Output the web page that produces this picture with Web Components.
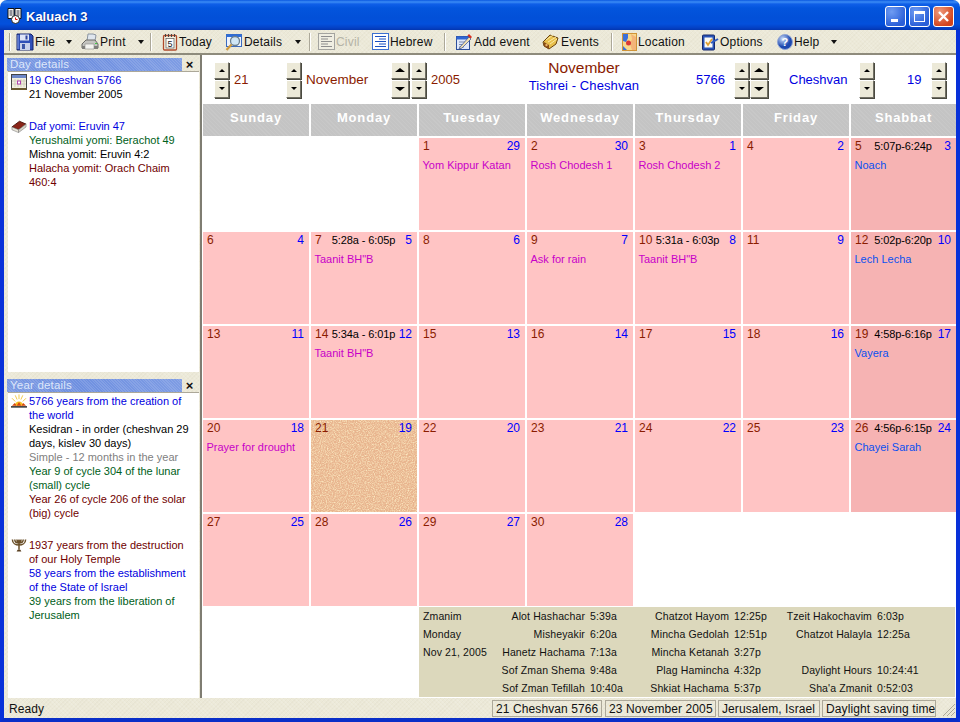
<!DOCTYPE html>
<html>
<head>
<title>Kaluach 3</title>
<style>
html, body { margin:0; padding:0; background:#fff; }
body { font-family:"Liberation Sans", Arial, sans-serif; }
</style>
</head>
<body>
<kl-window>
	<kl-titlebar slot="title">Kaluach 3</kl-titlebar>
	<kl-toolbar slot="tools"></kl-toolbar>
	<kl-sidebar slot="side"></kl-sidebar>
	<kl-calendar slot="main"></kl-calendar>
	<kl-status slot="status"></kl-status>
</kl-window>

<script>
const BASE_FONT = '"Liberation Sans", Arial, sans-serif';
const HATCH = "repeating-linear-gradient(45deg, rgba(255,255,255,.13) 0 1px, transparent 1px 3px), repeating-linear-gradient(-45deg, rgba(120,115,85,.04) 0 1px, transparent 1px 3px)";
const NOISE = "url(\"data:image/svg+xml,%3Csvg xmlns='http://www.w3.org/2000/svg' width='106' height='92'%3E%3Cfilter id='n'%3E%3CfeTurbulence type='fractalNoise' baseFrequency='.85' numOctaves='2'/%3E%3CfeColorMatrix values='0 0 0 0 .96 0 0 0 0 .8 0 0 0 0 .52 2.2 0 0 0 -.85'/%3E%3C/filter%3E%3Crect width='106' height='92' filter='url(%23n)'/%3E%3C/svg%3E\")";

// Toolbar icons, 16x16
const ICONS = {
	file: `<svg width="18" height="18" viewBox="0 0 18 18"><path d="M1 1h14l2 2v14H1z" fill="#2f4fb8" stroke="#16246c"/><rect x="4" y="1.5" width="9" height="6" fill="#dfe5f6"/><rect x="9.5" y="2.5" width="2" height="4" fill="#30459a"/><path d="M2 2v14" stroke="#8ea6e8"/><rect x="4" y="10" width="10" height="7" fill="#c8d0ea"/><rect x="6" y="11" width="3" height="5" fill="#3c55a8"/></svg>`,
	print: `<svg width="18" height="18" viewBox="0 0 18 18"><path d="M6 8l1-7h5l3 1-1 6z" fill="#dfe6ee" stroke="#8a94a0"/><path d="M1 11l4-4h9l3 4v4H1z" fill="#c4c4c0" stroke="#6a6a66"/><path d="M1 13h16v3H1z" fill="#7e7e7a"/><path d="M4 11h9v5H4z" fill="#f4f4f0" stroke="#8a8a86" stroke-width=".6"/><rect x="14" y="10" width="2" height="1" fill="#4c4"/></svg>`,
	today: `<svg width="16" height="18" viewBox="0 0 16 18"><rect x="1.5" y="2.5" width="13" height="14.500" rx="1" fill="#f3f0e0" stroke="#b04a2c" stroke-width="1.300"/><rect x="4" y="5.500" width="8" height="9.500" fill="#fff" stroke="#555" stroke-width=".7"/><path d="M3.500 1v3M6.500 1v3M9.500 1v3M12.500 1v3" stroke="#444"/><text x="8" y="14" font-size="9" font-family="Liberation Sans" text-anchor="middle" fill="#222">5</text></svg>`,
	details: `<svg width="18" height="18" viewBox="0 0 18 18"><rect x="1.500" y="1.500" width="15" height="12" fill="#eef3fc" stroke="#3a6ac0"/><rect x="1.500" y="1.500" width="15" height="2.500" fill="#2f6ed8"/><circle cx="10" cy="8" r="4.500" fill="#cfe6f6" stroke="#6c7f8c" stroke-width="1.300"/><path d="M6.500 11.500L1.500 17" stroke="#d09a3e" stroke-width="2.200"/></svg>`,
	civil: `<svg width="17" height="17" viewBox="0 0 17 17"><rect x=".5" y=".5" width="16" height="16" fill="#f0eee2" stroke="#a4a4a0"/><path d="M3 3.5h11M3 6h7M3 8.5h11M3 11h7M3 13.5h11" stroke="#8e8e8e"/></svg>`,
	hebrew: `<svg width="17" height="17" viewBox="0 0 17 17"><rect x=".5" y=".5" width="16" height="16" fill="#fff" stroke="#3c70d0"/><path d="M3 3.5h11M7 6h7M3 8.5h11M7 11h7M3 13.5h11" stroke="#1a50c0"/></svg>`,
	add: `<svg width="18" height="18" viewBox="0 0 18 18"><rect x="1.500" y="3.500" width="13" height="13" fill="#dfe8fa" stroke="#2c4f9c"/><rect x="1.500" y="3.500" width="13" height="3" fill="#2f66d4"/><path d="M4 9h6M4 11.500h4M4 14h5" stroke="#7d8db0"/><path d="M5 14l9-10 2 2-9 9-3 1z" fill="#f0e0b0" stroke="#334a8a" stroke-width=".7"/><path d="M14 1l3 3-1.500 1.500-3-3z" fill="#d83020"/></svg>`,
	events: `<svg width="18" height="18" viewBox="0 0 18 18"><path d="M1 9l7-7 8 3-2 6-7 5-5-3z" fill="#e8c04c" stroke="#6a4410"/><path d="M4 7l7-5M6 9l8-5M8 11l7-5" stroke="#fbeaa4"/><path d="M2 9l5 3v4l-5-3z" fill="#8a4c14"/><circle cx="4.500" cy="12" r="1.200" fill="#e8b46c"/></svg>`,
	location: `<svg width="15" height="18" viewBox="0 0 15 18"><rect x=".5" y=".5" width="14" height="17" fill="#f8d88c" stroke="#d09438"/><path d="M1 1h5v4l-2 4-3-1z" fill="#3c70d8"/><path d="M9 1l5 3v13h-4l-2-6 2-5z" fill="#f4b478"/><circle cx="6.500" cy="10" r="2.500" fill="#d83838"/><path d="M1 13l4 4H1z" fill="#3c70d8"/></svg>`,
	options: `<svg width="18" height="18" viewBox="0 0 18 18"><rect x="1.500" y="2" width="12" height="15" rx="1" fill="#2a55b8" stroke="#16296c"/><rect x="3.500" y="4.500" width="8" height="10" fill="#fbfbf4"/><path d="M5 9l2 3 4-6" fill="none" stroke="#e0a030" stroke-width="1.800"/><path d="M10 10l7-4" stroke="#2f5cc0" stroke-width="2"/></svg>`,
	help: `<svg width="16" height="16" viewBox="0 0 16 16"><defs><radialGradient id="h" cx=".35" cy=".3"><stop offset="0" stop-color="#cfe0fb"/><stop offset="1" stop-color="#1e49b0"/></radialGradient></defs><circle cx="8" cy="8" r="7.5" fill="url(#h)" stroke="#8fa4d4"/><text x="8" y="12" font-size="11" font-weight="bold" font-family="Liberation Sans" text-anchor="middle" fill="#fff">?</text></svg>`,
	cal: `<svg width="16" height="18" viewBox="0 0 16 18"><rect x=".5" y="1.5" width="15" height="15" fill="#f2f0e2" stroke="#444"/><rect x="1" y="2" width="14" height="3" fill="#6d88c8"/><path d="M4 6v8M7 6v8M10 6v8M13 6v8M1 8h14M1 11h14" stroke="#c9c6b0" stroke-width=".7"/><rect x="6.5" y="8" width="3" height="3" fill="#fff" stroke="#b040b0"/><rect x=".5" y="15" width="15" height="2" fill="#6a5a30"/></svg>`,
	book: `<svg width="17" height="14" viewBox="0 0 17 14"><path d="M1 8l8-6 7 3-8 6z" fill="#8a2418" stroke="#4a1810"/><path d="M1 8l7 3v3l-7-3z" fill="#e8e4d8" stroke="#777" stroke-width=".6"/><path d="M8 11l8-6v3l-8 6z" fill="#d8d4c8" stroke="#777" stroke-width=".6"/></svg>`,
	sun: `<svg width="17" height="14" viewBox="0 0 17 14"><path d="M8.500 0v5M4.500 1l2 4.500M12.500 1l-2 4.500M1 4l3.500 3.500M16 4l-3.500 3.500" stroke="#f0c840"/><path d="M4 12a4.500 4.500 0 0 1 9 0z" fill="#f6c020"/><path d="M1 12l3-3 2 3 2.500-4 2.500 4 2-3 3 3z" fill="#d84810"/><rect y="12.500" width="17" height="1.500" fill="#222"/></svg>`,
	menorah: `<svg width="17" height="15" viewBox="0 0 17 15"><g fill="none" stroke="#6a4f28" stroke-width="1.600"><path d="M8.500 1v11M1.500 1c0 8 14 8 14 0M4 1c0 5 9 5 9 0M6.300 1c0 3 4.400 3 4.400 0"/></g><path d="M6 14h5l-1-2H7z" fill="#5a4020"/></svg>`
};

class KlWindow extends HTMLElement {
	constructor() {
		super();
		this.attachShadow({mode:"open"}).innerHTML = `<style>
			:host { display:flex; flex-direction:column; width:960px; height:722px; box-sizing:border-box;
				background:#ece9d8; overflow:hidden; border-radius:7px 7px 0 0;
				font:11px ${BASE_FONT}; }
			.body { flex:1; display:flex; flex-direction:column; min-height:0;
				border-left:4px solid #0831d9; border-right:4px solid #0831d9; border-bottom:4px solid #0a2fc8; }
			.main { flex:1; display:flex; min-height:0; }
		</style>
		<slot name="title"></slot>
		<div class="body">
			<slot name="tools"></slot>
			<div class="main"><slot name="side"></slot><slot name="main"></slot></div>
			<slot name="status"></slot>
		</div>`;
	}
}

class KlTitlebar extends HTMLElement {
	constructor() {
		super();
		this.attachShadow({mode:"open"}).innerHTML = `<style>
			:host { display:flex; align-items:center; height:30px; box-sizing:border-box; flex:none; padding:2px 6px 0 7px; gap:3px;
				background:linear-gradient(180deg,#0a58e0 0,#3b8cf5 2px,#0f5fe8 4px,#0355dd 8px,#0250d8 18px,#0350dc 24px,#0440c4 28px,#0336b0 30px);
				color:#fff; font:bold 13px ${BASE_FONT}; text-shadow:1px 1px 0 #0b2a90; }
			.t { flex:1; }
			.b { width:21px; height:21px; box-sizing:border-box; border:1px solid #fff; border-radius:3px;
				display:flex; align-items:center; justify-content:center;
				background:radial-gradient(circle at 30% 25%,#6f9cf2,#2a5fd8 75%); }
			.x { background:radial-gradient(circle at 30% 25%,#ef9a7c,#d2441c 75%); }
		</style>
		<svg width="16" height="18" viewBox="0 0 16 18"><path d="M1 1.500h6v10H1zM8 1.500h6v10H8z" fill="#fff" stroke="#111"/><path d="M2.500 4h3M2.500 6h3M2.500 8h3M9.500 4h3M9.500 6h3M9.500 8h3" stroke="#223"/><circle cx="8.500" cy="12.500" r="4" fill="#fff" stroke="#222"/><path d="M8.500 10.500v2h2" stroke="#d00" fill="none"/></svg>
		<span class="t"><slot></slot></span>
		<span class="b"><svg width="13" height="13"><rect x="2" y="9" width="7" height="3" fill="#fff"/></svg></span>
		<span class="b"><svg width="13" height="13"><rect x="1.500" y="1.500" width="10" height="10" fill="none" stroke="#fff"/><rect x="1" y="1" width="11" height="3" fill="#fff"/></svg></span>
		<span class="b x"><svg width="13" height="13"><path d="M2 2l9 9M11 2l-9 9" stroke="#fff" stroke-width="2.400"/></svg></span>`;
	}
}

// width attr is the slot of the whole button, so that the row keeps its spacing
class KlTool extends HTMLElement {
	constructor() {
		super();
		this.attachShadow({mode:"open"}).innerHTML = `<style>
			:host { display:flex; align-items:center; flex:none; gap:1px; height:24px; padding-top:1px; box-sizing:border-box; font-size:12px; color:#111; letter-spacing:.2px; white-space:nowrap; }
			:host([disabled]) { color:#b5b3a6; }
			.a { margin-left:auto; width:0; height:0; border:3.500px solid transparent; border-top:4px solid #111; border-bottom:0; }
			.i { display:flex; margin-top:-1px; }
		</style><span class="i"></span><slot></slot>`;
	}
	connectedCallback() {
		this.shadowRoot.querySelector(".i").innerHTML = ICONS[this.getAttribute("icon")];
		this.style.width = this.getAttribute("w") + "px";
		this.style.marginRight = this.getAttribute("m") + "px";
		if(this.hasAttribute("arrow")) {
			const a = document.createElement("span");
			a.className = "a";
			this.shadowRoot.appendChild(a);
		}
	}
}

class KlToolbar extends HTMLElement {
	constructor() {
		super();
		// icon, label, width, gap after, arrow, disabled; a number is a separator and the gap after it
		const tools = [
			["file","File",56,9,1],["print","Print",63,6,1],10,
			["today","Today",51,12],["details","Details",76,8,1],7,
			["civil","Civil",42,12,0,1],["hebrew","Hebrew",61,11],9,
			["add","Add event",74,13],["events","Events",57,12],9,
			["location","Location",65,14],["options","Options",64,12],["help","Help",60,0,1]
		];
		this.attachShadow({mode:"open"}).innerHTML = `<style>
			:host { display:flex; align-items:center; height:25px; flex:none; padding-left:5px; box-sizing:border-box;
				background-color:#ece9d8; background-image:${HATCH}; border-bottom:2px solid #8e8b7c; }
			.g { width:1px; height:18px; background:#a6a394; border-right:1px solid #fff; margin:0 5px 0 0; flex:none; }
			.s { width:1px; height:18px; background:#aca899; border-right:1px solid #fff; flex:none; }
		</style><span class="g"></span>`;
		for(const t of tools) {
			if(typeof t == "number") {
				const s = document.createElement("span");
				s.className = "s";
				s.style.marginRight = t + "px";
				this.shadowRoot.appendChild(s);
				continue;
			}
			const el = document.createElement("kl-tool");
			el.setAttribute("icon", t[0]);
			el.setAttribute("w", t[2]);
			el.setAttribute("m", t[3]);
			el.textContent = t[1];
			if(t[4]) el.setAttribute("arrow", "");
			if(t[5]) el.setAttribute("disabled", "");
			this.shadowRoot.appendChild(el);
		}
	}
}

class KlPanel extends HTMLElement {
	constructor() {
		super();
		this.attachShadow({mode:"open"}).innerHTML = `<style>
			:host { display:flex; flex-direction:column; min-height:0; }
			.h { display:flex; height:13px; flex:none; align-items:center; }
			.c { flex:none; width:175px; height:13px; line-height:13px; padding-left:3px; box-sizing:border-box; font-size:11.500px; color:#dde6fa;
				letter-spacing:.2px; overflow:hidden;
				background-color:#7c9be2;
				background-image:repeating-linear-gradient(45deg, rgba(255,255,255,.12) 0 1px, transparent 1px 2px), linear-gradient(90deg,#7a98e2,#6f90e0 40%,#7e9ce4); }
			.x { width:15px; text-align:center; font:bold 13px ${BASE_FONT}; color:#111; line-height:13px; }
			.b { flex:1; background:#fff; margin:0 1px 0 1px; padding:1px 0 0 3px; min-height:0; border-top:1px solid #aca899; }
		</style>
		<div class="h"><div class="c"></div><div class="x">×</div></div>
		<div class="b"><slot></slot></div>`;
	}
	connectedCallback() {
		this.shadowRoot.querySelector(".c").textContent = this.getAttribute("heading");
	}
}

// icon + text lines; one line of text per child
class KlInfo extends HTMLElement {
	constructor() {
		super();
		this.attachShadow({mode:"open"}).innerHTML = `<style>
			:host { display:flex; gap:2px; margin-bottom:18px; font-size:11px; line-height:14px; white-space:nowrap; }
			.i { width:16px; flex:none; padding-top:0; display:flex; justify-content:center; align-items:flex-start; }
			.t { display:flex; flex-direction:column; }
		</style><div class="i"></div><div class="t"></div>`;
	}
	set lines(list) {
		const t = this.shadowRoot.querySelector(".t");
		for(const [color, text] of list) {
			const d = document.createElement("div");
			d.style.color = color;
			d.textContent = text;
			t.appendChild(d);
		}
	}
	set icon(name) {
		this.shadowRoot.querySelector(".i").innerHTML = ICONS[name];
	}
}

class KlSidebar extends HTMLElement {
	constructor() {
		super();
		const BLUE = "#0000e0", GREEN = "#006020", RED = "#700000", BLACK = "#000", GREY = "#808080";
		const sections = [
			["Day details", "flex:none;height:314px", [
				["cal", [[BLUE,"19 Cheshvan 5766"],[BLACK,"21 November 2005"]]],
				["book", [[BLUE,"Daf yomi: Eruvin 47"],[GREEN,"Yerushalmi yomi: Berachot 49"],[BLACK,"Mishna yomit: Eruvin 4:2"],[RED,"Halacha yomit: Orach Chaim"],[RED,"460:4"]]]
			]],
			["Year details", "flex:1", [
				["sun", [[BLUE,"5766 years from the creation of"],[BLUE,"the world"],[BLACK,"Kesidran - in order (cheshvan 29"],[BLACK,"days, kislev 30 days)"],[GREY,"Simple - 12 months in the year"],[GREEN,"Year 9 of cycle 304 of the lunar"],[GREEN,"(small) cycle"],[RED,"Year 26 of cycle 206 of the solar"],[RED,"(big) cycle"]]],
				["menorah", [[RED,"1937 years from the destruction"],[RED,"of our Holy Temple"],[BLUE,"58 years from the establishment"],[BLUE,"of the State of Israel"],[GREEN,"39 years from the liberation of"],[GREEN,"Jerusalem"]]]
			]]
		];
		const root = this.attachShadow({mode:"open"});
		root.innerHTML = `<style>
			:host { display:flex; flex-direction:column; flex:none; width:198px; box-sizing:border-box; padding:3px 0 0 3px; gap:7px;
				background-color:#ece9d8; background-image:${HATCH}; border-right:2px solid #7f7d72; }
		</style>`;
		for(const [heading, css, blocks] of sections) {
			const p = document.createElement("kl-panel");
			p.setAttribute("heading", heading);
			p.style.cssText = css;
			for(const [icon, lines] of blocks) {
				const b = document.createElement("kl-info");
				p.appendChild(b);
				b.icon = icon;
				b.lines = lines;
			}
			root.appendChild(p);
		}
	}
}

class KlSpin extends HTMLElement {
	constructor() {
		super();
		this.attachShadow({mode:"open"}).innerHTML = `<style>
			:host { display:flex; flex-direction:column; gap:1px; flex:none; width:15px; height:36px; }
			:host([big]) { width:18px; }
			b { flex:1; box-sizing:border-box; background:#ece9d8; display:flex; align-items:center; justify-content:center;
				border:1px solid; border-color:#fff #716f64 #716f64 #fff; box-shadow:1px 1px 0 #4a4a40; }
			i { width:0; height:0; border:3px solid transparent; }
			:host([big]) i { border-width:4px 5px; }
			.u { border-top:0; border-bottom-color:#000; }
			.d { border-bottom:0; border-top-color:#000; }
		</style><b><i class="u"></i></b><b><i class="d"></i></b>`;
	}
}

// one date readout in the strip over the grid
class KlDateBar extends HTMLElement {
	constructor() {
		super();
		this.attachShadow({mode:"open"}).innerHTML = `<style>
			:host { display:flex; align-items:center; height:49px; flex:none; padding-left:11px; box-sizing:border-box; font-size:13px; }
			.r { color:#8a1c00; } .n { color:#0000e0; }
			span { flex:none; white-space:nowrap; }
			kl-spin { margin-right:5px; }
			.mid { flex:none; width:200px; text-align:center; margin:-6px 12px 0 0; }
			.mid div:first-child { color:#8a1c00; font-size:15.500px; line-height:18px; }
			.mid div:last-child { color:#0000e0; font-size:13px; line-height:17px; letter-spacing:.1px; }
		</style>
		<kl-spin></kl-spin><span class="r" style="width:52px">21</span>
		<kl-spin></kl-spin><span class="r" style="width:85px;font-size:13.500px">November</span>
		<kl-spin big style="margin-right:2px"></kl-spin><kl-spin></kl-spin><span class="r" style="width:53px">2005</span>
		<div class="mid"><div>November</div><div>Tishrei - Cheshvan</div></div>
		<span class="n" style="width:38px">5766</span>
		<kl-spin style="margin-right:1px"></kl-spin><kl-spin big style="margin-right:21px"></kl-spin>
		<span class="n" style="width:70px">Cheshvan</span><kl-spin style="margin-right:33px"></kl-spin>
		<span class="n" style="width:24px">19</span><kl-spin></kl-spin>`;
	}
}

class KlDay extends HTMLElement {
	constructor() {
		super();
		this.attachShadow({mode:"open"}).innerHTML = `<style>
			:host { display:block; background:#ffc4c4; box-sizing:border-box; padding:1px 5px 0 4px; overflow:hidden; }
			:host([empty]) { background:#fff; }
			:host([shabbat]) { background:#f6b3b3; }
			:host([selected]) { background-color:#e8b48e; background-image:${NOISE}; }
			.top { display:grid; grid-template-columns:1fr auto 1fr; align-items:center; line-height:15px; font-size:12px; }
			.g { color:#8a1c00; }
			.h { color:#0000ff; text-align:right; }
			.tm { color:#000; font-size:11px; white-space:nowrap; letter-spacing:-.1px; }
			.e { margin-top:4px; font-size:11px; line-height:14px; white-space:nowrap; margin-left:-.5px; }
		</style><div class="top"><span class="g"></span><span class="tm"></span><span class="h"></span></div><div class="e"></div>`;
	}
	connectedCallback() {
		const s = this.shadowRoot;
		s.querySelector(".g").textContent = this.getAttribute("d") || "";
		s.querySelector(".h").textContent = this.getAttribute("h") || "";
		s.querySelector(".tm").textContent = this.getAttribute("t") || "";
		const e = s.querySelector(".e");
		e.textContent = this.getAttribute("ev") || "";
		e.style.color = this.hasAttribute("shabbat") ? "#0a50f0" : "#c800c8";
	}
}

class KlZmanim extends HTMLElement {
	constructor() {
		super();
		const rows = [
			["Zmanim","Alot Hashachar","5:39a","Chatzot Hayom","12:25p","Tzeit Hakochavim","6:03p"],
			["Monday","Misheyakir","6:20a","Mincha Gedolah","12:51p","Chatzot Halayla","12:25a"],
			["Nov 21, 2005","Hanetz Hachama","7:13a","Mincha Ketanah","3:27p","",""],
			["","Sof Zman Shema","9:48a","Plag Hamincha","4:32p","Daylight Hours","10:24:41"],
			["","Sof Zman Tefillah","10:40a","Shkiat Hachama","5:37p","Sha'a Zmanit","0:52:03"]
		];
		let html = "";
		for(const r of rows)
			r.forEach((c, i) => html += `<span class="${i == 0 ? "f" : i % 2 ? "l" : "v"}">${c}</span>`);
		this.attachShadow({mode:"open"}).innerHTML = `<style>
			:host { display:grid; height:90px; box-sizing:border-box; padding:0 0 0 4px; margin:0 1px 1px 216px;
				grid-template-columns:67px 95px 55px 89px 56px 87px 1fr; grid-auto-rows:18px; align-items:center;
				background:#dcd8bc; font-size:10.500px; letter-spacing:.12px; color:#111; white-space:nowrap; }
			.l { justify-self:end; }
			.v { padding-left:5px; }
		</style>${html}`;
	}
}

class KlCalendar extends HTMLElement {
	constructor() {
		super();
		const names = ["Sunday","Monday","Tuesday","Wednesday","Thursday","Friday","Shabbat"];
		const T = 'Taanit BH"B';
		// d, h, time, event
		const days = [
			[],[],
			[1,29,"","Yom Kippur Katan"],[2,30,"","Rosh Chodesh 1"],[3,1,"","Rosh Chodesh 2"],[4,2],[5,3,"5:07p-6:24p","Noach"],
			[6,4],[7,5,"5:28a - 6:05p",T],[8,6],[9,7,"","Ask for rain"],[10,8,"5:31a - 6:03p",T],[11,9],[12,10,"5:02p-6:20p","Lech Lecha"],
			[13,11],[14,12,"5:34a - 6:01p",T],[15,13],[16,14],[17,15],[18,16],[19,17,"4:58p-6:16p","Vayera"],
			[20,18,"","Prayer for drought"],[21,19],[22,20],[23,21],[24,22],[25,23],[26,24,"4:56p-6:15p","Chayei Sarah"],
			[27,25],[28,26],[29,27],[30,28],[],[],[]
		];
		const root = this.attachShadow({mode:"open"});
		root.innerHTML = `<style>
			:host { flex:1; display:flex; flex-direction:column; background:#fff; min-width:0; padding-left:1px; }
			.g { display:grid; grid-template-columns:repeat(6,106px) 105px; gap:2px; margin-bottom:1px; }
			.hd { height:32px; text-align:center; color:#fff; font:bold 13px/28px ${BASE_FONT}; letter-spacing:.85px;
				background-color:#c4c4c4;
				background-image:repeating-linear-gradient(45deg,rgba(255,255,255,.07) 0 1px,transparent 1px 3px); }
			kl-day { height:92px; }
		</style><kl-date-bar></kl-date-bar><div class="g"></div><kl-zmanim></kl-zmanim>`;
		const g = root.querySelector(".g");
		for(const n of names) {
			const h = document.createElement("div");
			h.className = "hd";
			h.textContent = n;
			g.appendChild(h);
		}
		days.forEach((d, i) => {
			const c = document.createElement("kl-day");
			if(!d.length)
				c.setAttribute("empty", "");
			else {
				c.setAttribute("d", d[0]);
				c.setAttribute("h", d[1]);
				if(d[2]) c.setAttribute("t", d[2]);
				if(d[3]) c.setAttribute("ev", d[3]);
				if(i % 7 == 6) c.setAttribute("shabbat", "");
				if(d[0] == 21) c.setAttribute("selected", "");
			}
			g.appendChild(c);
		});
	}
}

class KlStatus extends HTMLElement {
	constructor() {
		super();
		this.attachShadow({mode:"open"}).innerHTML = `<style>
			:host { display:flex; align-items:center; height:20px; flex:none; box-sizing:border-box; padding:1px 0 0 5px; font-size:12px; letter-spacing:.1px; color:#111;
				background-color:#ece9d8; background-image:${HATCH}; }
			.r { flex:1; }
			.p { flex:none; height:17px; line-height:16px; box-sizing:border-box; border:1px solid #aca899; padding-left:3px; margin-left:2px; white-space:nowrap; overflow:hidden; }
			svg { margin-left:3px; flex:none; }
		</style>
		<span class="r">Ready</span>
		<span class="p" style="width:110px">21 Cheshvan 5766</span>
		<span class="p" style="width:111px;margin-left:3px">23 November 2005</span>
		<span class="p" style="width:102px">Jerusalem, Israel</span>
		<span class="p" style="width:114px">Daylight saving time</span>
		<svg width="17" height="17" viewBox="0 0 17 17"><path d="M16 4L4 16M16 8L8 16M16 12l-4 4" stroke="#aca899"/></svg>`;
	}
}

customElements.define("kl-window", KlWindow);
customElements.define("kl-titlebar", KlTitlebar);
customElements.define("kl-tool", KlTool);
customElements.define("kl-toolbar", KlToolbar);
customElements.define("kl-panel", KlPanel);
customElements.define("kl-info", KlInfo);
customElements.define("kl-sidebar", KlSidebar);
customElements.define("kl-spin", KlSpin);
customElements.define("kl-date-bar", KlDateBar);
customElements.define("kl-day", KlDay);
customElements.define("kl-zmanim", KlZmanim);
customElements.define("kl-calendar", KlCalendar);
customElements.define("kl-status", KlStatus);
</script>
</body>
</html>
